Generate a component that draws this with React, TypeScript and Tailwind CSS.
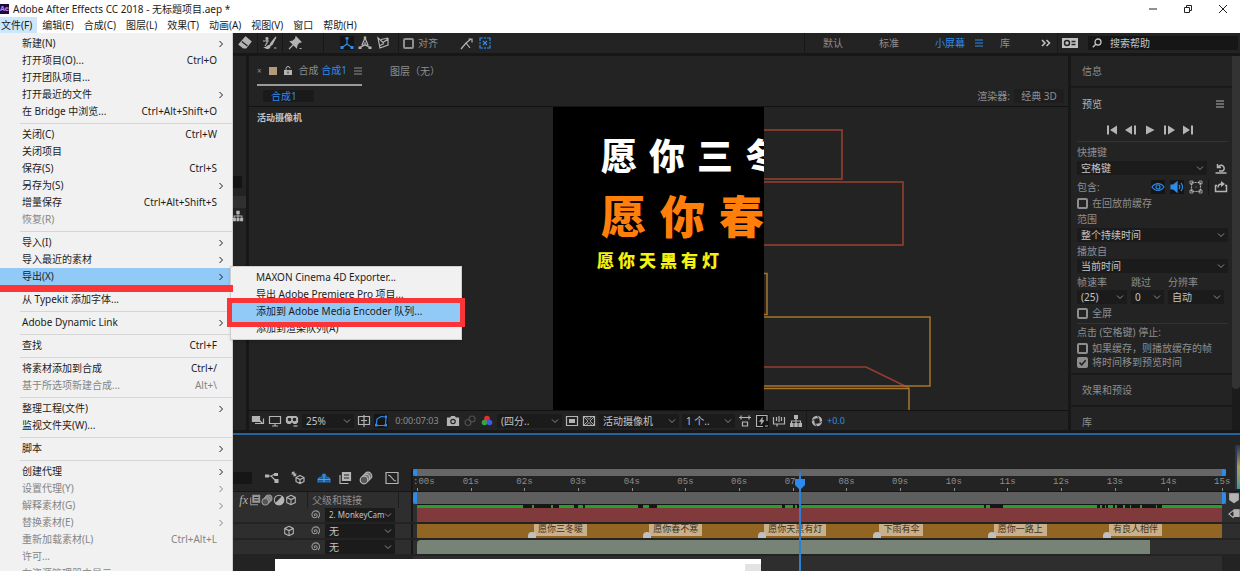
import { Fragment } from "react";
import type { ReactNode } from "react";
import clsx from "clsx";

type MenuEntry = {
  label: string;
  keys?: string;
  sub?: boolean;
  disabled?: boolean;
  open?: boolean;
};

const menuBar = ["文件(F)", "编辑(E)", "合成(C)", "图层(L)", "效果(T)", "动画(A)", "视图(V)", "窗口", "帮助(H)"];

const fileMenu: MenuEntry[][] = [
  [
    { label: "新建(N)", sub: true },
    { label: "打开项目(O)...", keys: "Ctrl+O" },
    { label: "打开团队项目..." },
    { label: "打开最近的文件", sub: true },
    { label: "在 Bridge 中浏览...", keys: "Ctrl+Alt+Shift+O" },
  ],
  [
    { label: "关闭(C)", keys: "Ctrl+W" },
    { label: "关闭项目" },
    { label: "保存(S)", keys: "Ctrl+S" },
    { label: "另存为(S)", sub: true },
    { label: "增量保存", keys: "Ctrl+Alt+Shift+S" },
    { label: "恢复(R)", disabled: true },
  ],
  [
    { label: "导入(I)", sub: true },
    { label: "导入最近的素材", sub: true },
    { label: "导出(X)", sub: true, open: true },
  ],
  [{ label: "从 Typekit 添加字体..." }],
  [{ label: "Adobe Dynamic Link", sub: true }],
  [{ label: "查找", keys: "Ctrl+F" }],
  [
    { label: "将素材添加到合成", keys: "Ctrl+/" },
    { label: "基于所选项新建合成...", keys: "Alt+\\", disabled: true },
  ],
  [{ label: "整理工程(文件)", sub: true }, { label: "监视文件夹(W)..." }],
  [{ label: "脚本", sub: true }],
  [
    { label: "创建代理", sub: true },
    { label: "设置代理(Y)", sub: true, disabled: true },
    { label: "解释素材(G)", sub: true, disabled: true },
    { label: "替换素材(E)", sub: true, disabled: true },
    { label: "重新加载素材(L)", keys: "Ctrl+Alt+L", disabled: true },
    { label: "许可...", disabled: true },
    { label: "在资源管理器中显示", disabled: true },
  ],
];

const exportMenu = [
  "MAXON Cinema 4D Exporter...",
  "导出 Adobe Premiere Pro 项目...",
  "添加到 Adobe Media Encoder 队列...",
  "添加到渲染队列(A)",
];

const markers = [
  { at: 14.3, text: "愿你三冬暖" },
  { at: 28.6, text: "愿你春不寒" },
  { at: 42.9, text: "愿你天黑有灯" },
  { at: 57.2, text: "下雨有伞" },
  { at: 71.4, text: "愿你一路上" },
  { at: 85.7, text: "有良人相伴" },
];

// cached ranges of the preview, start and end
const cached = [
  [0, 106], [115, 117], [134, 136], [142, 157], [161, 166], [168, 221], [226, 232], [240, 365],
  [368, 376], [378, 380], [382, 567], [569, 573], [586, 680], [683, 685], [688, 689], [691, 696],
  [698, 700], [706, 708], [713, 714], [723, 725], [739, 740], [745, 805],
];

function Icon({ children, className = "size-3.5" }: { children: ReactNode; className?: string }) {
  return (
    <svg
      viewBox="0 0 14 14"
      className={clsx("shrink-0", className)}
      fill="none"
      stroke="currentColor"
      strokeWidth="1.2"
      aria-hidden="true"
    >
      {children}
    </svg>
  );
}

function IconButton({ name, on, className, children }: { name: string; on?: boolean; className?: string; children: ReactNode }) {
  return (
    <button
      type="button"
      aria-label={name}
      className={clsx("shrink-0", on ? "bg-[#151515] text-[#2d8ceb]" : "text-[#b4b4b4]", className)}
    >
      <Icon>{children}</Icon>
    </button>
  );
}

function Chevron({ className }: { className?: string }) {
  return (
    <svg viewBox="0 0 8 8" className={clsx("size-2 shrink-0", className)} fill="none" stroke="currentColor" aria-hidden="true">
      <path d="M1 2.5 4 5.5 7 2.5" />
    </svg>
  );
}

function Burger({ className }: { className?: string }) {
  return (
    <svg viewBox="0 0 8 8" className={clsx("size-2 shrink-0", className)} stroke="currentColor" aria-hidden="true">
      <path d="M0 1h8M0 4h8M0 7h8" />
    </svg>
  );
}

function Select({ name, value, className }: { name: string; value: string; className?: string }) {
  return (
    <div className={clsx("relative flex h-3.5 shrink-0 items-center bg-[#1b1b1b] text-[#c4c4c4]", className)}>
      <select aria-label={name} className="h-full w-full appearance-none pr-2 pl-1 outline-none">
        <option>{value}</option>
      </select>
      <Chevron className="pointer-events-none absolute right-[3px] text-[#8c8c8c]" />
    </div>
  );
}

function Check({ children, checked }: { children: ReactNode; checked?: boolean }) {
  return (
    <label className="flex h-3.5 shrink-0 items-center gap-1 whitespace-nowrap">
      <span className="relative flex size-[11px] shrink-0">
        <input
          type="checkbox"
          defaultChecked={checked}
          className="peer size-[11px] appearance-none rounded-[2px] border-2 border-[#8e8e8e] checked:bg-[#8e8e8e]"
        />
        <svg viewBox="0 0 11 11" className="pointer-events-none absolute inset-0 hidden peer-checked:block" fill="none" stroke="#222" strokeWidth="1.6">
          <path d="M2.5 5.5 4.7 7.8 8.7 3.2" />
        </svg>
      </span>
      {children}
    </label>
  );
}

function Divider() {
  return <span className="h-full w-px shrink-0 bg-[#171717]" />;
}

const cube = <path d="M7 1.5 12 4v6L7 12.5 2 10V4zM2 4l5 2.5L12 4M7 6.5v6" />;
const film = (
  <>
    <path fill="currentColor" d="M4.5 1.5h8v8h-8z" />
    <path d="M2 4v8.5h8.5" />
    <path stroke="#232323" d="M6 4h5M6 7h5" />
  </>
);
const blur = (
  <>
    <circle cx="9" cy="5" r="3.8" fill="#777" />
    <circle cx="7" cy="7" r="3.8" fill="#777" />
    <circle cx="5" cy="9" r="3.8" fill="#555" />
  </>
);
const tree = (
  <>
    <path fill="currentColor" stroke="none" d="M5 1h4v4H5zM1 9h3.6v4H1zM5.2 9h3.6v4H5.2zM9.4 9H13v4H9.4z" />
    <path d="M7 5v4M2.5 9V7h9v2" />
  </>
);
const spiral = <path d="M7.5 7.5c-1 .8-2-.6-1-1.5 1.5-1.2 3.6.2 3 2.2-.8 2.5-4.6 2.6-5.7.2C2.500 5.200 4.600 2.200 7.700 2.200c3 0 5 2.300 4.500 5.300-.2 1.500-1 2.500-1.800 3.200" />;

function FileMenu() {
  return (
    <div
      role="menu"
      aria-label="文件"
      className="absolute top-full left-0 z-20 w-[233px] border-r border-[#d0d0d0] bg-[#f1f1f1] pt-[2px] pb-4 text-[10px] text-[#1c1c1c]"
    >
      {fileMenu.map((group, i) => (
        <Fragment key={i}>
          {i > 0 && <hr className="mt-[3px] mb-[2px] ml-5 border-[#d6d6d6]" />}
          {group.map((item) => (
            <div key={item.label} className={clsx("relative mr-[2px]", item.open && "z-10 bg-[#91c9f7]")}>
              <button
                type="button"
                role="menuitem"
                disabled={item.disabled}
                className={clsx(
                  "flex h-[17px] w-full items-center justify-between pr-[13px] pl-[22px] whitespace-nowrap",
                  item.disabled && "text-[#858585]",
                )}
              >
                <span>{item.label}</span>
                {item.keys && <span>{item.keys}</span>}
                {item.sub && <Chevron className="-mr-2 -rotate-90" />}
              </button>
              {item.open && <ExportMenu />}
            </div>
          ))}
        </Fragment>
      ))}
    </div>
  );
}

function ExportMenu() {
  return (
    <>
      <div
        role="menu"
        aria-label="导出"
        className="absolute -top-[2px] left-full w-[232px] border border-[#cfcfcf] bg-[#f1f1f1] pt-[2px] pb-[2px] shadow-sm"
      >
        {exportMenu.map((label, i) => (
          <div key={label} className={clsx("relative", i === 2 && "z-10")}>
            {i === 2 && (
              <span className="absolute -inset-x-1 -top-[5px] -bottom-[7px] border-[5px] border-[#fb3438] bg-[#91c9f7]" />
            )}
            <button type="button" role="menuitem" className="relative flex h-[17px] w-full items-center pl-[25px] whitespace-nowrap">
              {label}
            </button>
          </div>
        ))}
      </div>
      <span className="absolute top-full left-0 h-[7px] w-[233px] bg-[#fb3438]" />
    </>
  );
}

function Toolbar() {
  return (
    <div className="flex h-[23px] shrink-0 items-center border-b-[3px] border-[#171717] pl-[238px] text-[10px] text-[#8e8e8e]">
      <IconButton name="橡皮擦">
        <path fill="currentColor" d="M7.500 1 13 5.500 8 12H5.500L1 8.500z" />
        <path stroke="#232323" d="M3.800 5.500 9.500 10" />
      </IconButton>
      <div className="flex h-full items-center gap-[5px] pl-[5px]">
        <Divider />
        <IconButton name="Roto 笔刷">
          <path fill="currentColor" d="M13 1 8 7 6.500 10 9 8.500zM6 9.500c-1.500 0-2 2-4 2 2 1.500 5 1 5-1z" />
          <circle cx="4" cy="2.500" r="1" fill="currentColor" />
          <path d="M0 5h6M4 4v3L2 10M11 12h2.500" />
        </IconButton>
        <Divider />
        <IconButton name="操控点">
          <path fill="currentColor" d="M8 1l5 5-2 .5L9 9l-.5 2.500L2.500 5.500 5 5l2.500-2z" />
          <path d="M5.500 8.500 1 13M11.500 12.500h2" />
        </IconButton>
      </div>
      <div className="ml-[21px] flex h-full items-center gap-1">
        <Divider />
        <IconButton name="本地轴" on className="ml-3">
          <path d="M7 2.500V8M7 8l-5 3.500M7 8l5 3.500" />
          <path fill="currentColor" stroke="none" d="M5.500 1h3v2.500h-3zM.5 10h3v3h-3zM10.500 10h3v3h-3z" />
        </IconButton>
        <IconButton name="世界轴">
          <path d="M7 2 4 9h6zM7 6v3l-5 2.500M7 9l5 2.500" />
          <path fill="currentColor" stroke="none" d="M5.800.5h2.400v2.500H5.800zM.5 10.500h3v2.500h-3zM10.500 10.500h3v2.500h-3z" />
        </IconButton>
        <IconButton name="视图轴">
          <path d="M2 2l2 10 8-3V3L7 6.500zM5 3.500 12 2M4 9.500l4-2" />
        </IconButton>
      </div>
      <div className="ml-2 flex h-full items-center gap-1">
        <Divider />
        <Check>对齐</Check>
      </div>
      <div className="ml-[22px] flex gap-1">
        <IconButton name="延伸对齐">
          <path d="M1 13 6 7l4 5M6 7l5-4M8.500 3H12v3.500" />
        </IconButton>
        <IconButton name="边界对齐">
          <path stroke="#2d8ceb" d="M2 5V2h3M9 2h3v3M12 9v3H9M5 12H2V9M7 1v2M7 11v2M1 7h2M11 7h2" />
          <path stroke="#2d8ceb" d="M5 5l4 4M9 5 5 9" />
        </IconButton>
      </div>
      <div className="ml-auto flex h-full items-center">
        <Divider />
        <nav className="mr-[17px] ml-[18px] flex items-center gap-9 whitespace-nowrap">
          <button type="button">默认</button>
          <button type="button">标准</button>
          <button type="button" className="flex items-center gap-2.5 text-[#2d8ceb]">
            小屏幕 <Burger />
          </button>
        </nav>
        <button type="button">库</button>
        <svg viewBox="0 0 10 8" className="mr-1.5 ml-[31px] h-2 w-2.5" fill="none" stroke="#c4c4c4" strokeWidth="1.5">
          <path d="M1 1l3 3-3 3M5.500 1l3 3-3 3" />
        </svg>
        <Divider />
        <svg viewBox="0 0 16 10" className="mx-1 h-2.5 w-4" aria-hidden="true">
          <rect width="16" height="10" fill="#c0c0c0" />
          <circle cx="5" cy="5" r="2.500" fill="none" stroke="#222" strokeWidth="1.500" />
          <path d="M9.500 3.500h4M9.500 6.500h4" stroke="#222" strokeWidth="1.500" />
        </svg>
        <label className="mr-[2px] ml-[6px] flex h-3.5 w-[150px] items-center gap-2 bg-[#161616] pl-1 text-[#c4c4c4]">
          <svg viewBox="0 0 10 10" className="size-2.5 shrink-0" fill="none" stroke="currentColor" strokeWidth="1.300">
            <circle cx="6" cy="4" r="3" />
            <path d="M3.800 6.200.8 9.200" />
          </svg>
          <input aria-label="搜索帮助" placeholder="搜索帮助" className="w-full outline-none placeholder:text-[#c4c4c4]" />
        </label>
      </div>
    </div>
  );
}

function Viewer() {
  return (
    <section className="flex min-w-0 flex-1 flex-col border-r-[3px] border-[#171717] text-[10px] text-[#8e8e8e]">
      <div className="flex h-[30px] items-end gap-7 pl-2 whitespace-nowrap">
        <button type="button" className="flex h-[25px] items-center gap-[7px] border-b-2 border-[#9a9a9a] pb-1">
          <span className="text-[8px]">×</span>
          <span className="size-2 bg-[#b49a78]" />
          <svg viewBox="0 0 8 9" className="h-[9px] w-2" fill="#b4b4b4">
            <path d="M0 4h8v5H0z" />
            <path d="M2 4V2.500a2 2 0 0 1 4 0" fill="none" stroke="#b4b4b4" />
            <path d="M3.500 5.500h1v2h-1z" fill="#222" />
          </svg>
          <span>
            合成 <span className="text-[#2d8ceb]">合成1</span>
          </span>
          <Burger />
        </button>
        <button type="button" className="h-[25px] pb-1">图层（无）</button>
      </div>
      <div className="flex h-[21px] items-center justify-between border-b border-[#121212] pr-1 pl-3.5">
        <button type="button" className="h-3 w-[51px] bg-[#1a1a1a] pl-2 text-left leading-3 text-[#2d8ceb]">
          合成1
        </button>
        <div className="flex items-center gap-1">
          <span>渲染器:</span>
          <button type="button" className="h-3.5 w-[50px] bg-[#1e1e1e] leading-3">经典 3D</button>
        </div>
      </div>
      <div className="relative flex flex-1 justify-center overflow-hidden">
        <span className="absolute top-1 left-2 text-[9px] font-bold text-[#c4c4c4]">活动摄像机</span>
        <div className="relative h-full w-[211px] bg-black whitespace-nowrap">
          <div className="flex h-full flex-col overflow-hidden pl-11 font-black">
            <div className="mt-[26px] flex gap-3 pl-1 text-[36px] leading-12 text-white">
              <span>愿</span>
              <span>你</span>
              <span>三</span>
              <span>冬</span>
            </div>
            <div className="mt-2 flex gap-3.5 pl-1 text-[45px] leading-14 text-[#ff7f0a]">
              <span>愿</span>
              <span>你</span>
              <span>春</span>
            </div>
            <div className="mt-1 flex gap-1 text-[17px] leading-6 text-[#f2f20c]">
              {"愿你天黑有灯".split("").map((c) => (
                <span key={c}>{c}</span>
              ))}
            </div>
          </div>
          {/* layer bounds that hang outside the frame */}
          <svg viewBox="0 0 170 304" className="absolute top-0 left-full h-[304px] w-[170px]" fill="none" strokeWidth="1.500">
            <path stroke="#9c4230" d="M0 23h78v49H0M0 75h139v63H0" />
            <path stroke="#94402f" d="M0 260h102L145 281" />
            <path stroke="#a8742c" d="M0 166.500h3v41H0M0 210h166v69H0M0 281.500h145v23" />
          </svg>
        </div>
      </div>
      <div className="flex h-[20px] items-center gap-[3px] border-t border-[#121212] pl-[2px] whitespace-nowrap">
        <IconButton name="始终预览">
          <path d="M1.500 2.500h7v5h-7z" fill="currentColor" />
          <path d="M4 9.500h8.500V4.500M8.500 6.500l3 3" />
        </IconButton>
        <IconButton name="主查看器">
          <path d="M1.500 2.500h11v7h-11zM7 9.500V12M4 12h6" />
        </IconButton>
        <IconButton name="沉浸式">
          <path fill="currentColor" d="M1.500 4 3 2.500h8L12.500 4v4L11 9.500H9L7 7.500 5 9.500H3L1.500 8z" />
          <circle cx="4.500" cy="5.500" r="1.200" fill="#232323" stroke="#232323" />
          <circle cx="9.500" cy="5.500" r="1.200" fill="#232323" stroke="#232323" />
          <path d="M8.500 12h4" />
        </IconButton>
        <Select name="放大率" value="25%" className="w-[52px]" />
        <IconButton name="网格">
          <path d="M1.500 2.500h11v8h-11zM7 1v12M4 6.500h6" />
        </IconButton>
        <IconButton name="蒙版" on>
          <path d="M2 11.500 3 5l4-2.500 5 .5-.5 8.500z" />
          <path fill="currentColor" stroke="none" d="M1 10h2.500v2.500H1zM10.500 10H13v2.500h-2.500zM11 1.500h2V4h-2z" />
        </IconButton>
        <span className="w-[52px] text-center text-[9px]">0:00:07:03</span>
        <IconButton name="快照">
          <path fill="currentColor" d="M1.500 4h3l1-1.500h3l1 1.500h3v7.500h-11z" />
          <circle cx="7" cy="7.500" r="2.200" stroke="#232323" />
        </IconButton>
        <IconButton name="显示快照" className="opacity-30">
          <circle cx="9" cy="5" r="3" />
          <circle cx="5" cy="8.500" r="3" />
        </IconButton>
        <IconButton name="通道">
          <circle cx="7" cy="4.500" r="2.800" fill="#e03030" stroke="none" />
          <circle cx="4.500" cy="8.500" r="2.800" fill="#30a840" stroke="none" />
          <circle cx="9.500" cy="8.500" r="2.800" fill="#3a5ce0" stroke="none" />
        </IconButton>
        <Select name="分辨率" value="(四分.." className="w-[65px]" />
        <IconButton name="目标区域">
          <path d="M1.500 2.500h11v9h-11z" />
          <path fill="currentColor" stroke="none" d="M4 5h6v4H4z" />
        </IconButton>
        <IconButton name="透明网格">
          <path d="M1.500 2.500h11v9h-11z" />
          <path strokeWidth=".9" d="M2 3l4 4-4 4M12 3 8 7l4 4M4.500 3 7 5.500 9.500 3M4.500 11 7 8.500 9.500 11" />
        </IconButton>
        <Select name="3D 视图" value="活动摄像机" className="w-[80px]" />
        <Select name="视图布局" value="1 个.." className="w-[53px]" />
        <IconButton name="像素长宽比">
          <path d="M1 3.500h12M3 1.500v4M11 1.500v4M4.500 8h5v4h-5z" />
        </IconButton>
        <IconButton name="快速预览" className="bg-[#151515]">
          <path d="M12 7V1.500H1.500v11H8M10 12h3" />
          <path fill="currentColor" strokeWidth=".6" d="M7.500 3.500 4.500 7.500h2l-.5 3L9 6.500H7z" />
        </IconButton>
        <IconButton name="时间轴">
          <path d="M1.500 3v7h11V3M4.500 3v4M7 2v6M9.500 3v4M5 10.500v2" />
        </IconButton>
        <IconButton name="流程图">{tree}</IconButton>
        <Divider />
        <IconButton name="重置曝光度">
          <circle cx="7" cy="7" r="4" strokeWidth="2.500" />
          <path stroke="#232323" strokeWidth=".8" d="M7 1l2 4M13 7l-4 2M7 13l-2-4M1 7l4-2" />
        </IconButton>
        <span className="text-[9px] text-[#2d8ceb]">+0.0</span>
      </div>
    </section>
  );
}

const playback = [
  { name: "第一帧", d: "M2 2.500h2v9H2zM12 2.500v9L5 7z" },
  { name: "上一帧", d: "M8 2.500v9L1 7zM10 2.500h2v9h-2z" },
  { name: "播放", d: "M3 2.500v9L11.500 7z" },
  { name: "下一帧", d: "M2 2.500h2v9H2zM6 2.500v9L13 7z" },
  { name: "最后一帧", d: "M2 2.500v9L9 7zM10 2.500h2v9h-2z" },
];

function PreviewPanel() {
  return (
    <aside className="flex w-[169px] shrink-0 text-[10px] whitespace-nowrap text-[#8e8e8e]">
      <div className="flex min-w-0 flex-1 flex-col">
        <h2 className="flex h-8 shrink-0 items-center border-b-2 border-[#1a1a1a] pl-[11px]">信息</h2>
        <div className="flex shrink-0 flex-col border-b-2 border-[#1a1a1a] pr-1 pl-1.5">
          <h2 className="flex h-8 items-center justify-between pr-1 pl-[5px] text-[#b4b4b4]">
            预览 <Burger />
          </h2>
          <div className="flex h-[22px] items-center justify-center gap-[5px] border-b border-[#333] pr-1.5 pb-[2px] text-[#b4b4b4]">
            {playback.map((b) => (
              <button key={b.name} type="button" aria-label={b.name}>
                <svg viewBox="0 0 14 14" className="size-3.5" fill="currentColor">
                  <path d={b.d} />
                </svg>
              </button>
            ))}
          </div>
          <span className="mt-[2px] h-4 leading-4">快捷键</span>
          <div className="flex h-4 items-center justify-between">
            <Select name="快捷键" value="空格键" className="w-[130px]" />
            <IconButton name="重置">
              <path strokeWidth="1.500" d="M1.500 12h11M5 10h3.500a3 3 0 1 0-4-4M3.500 3v3.500H7" />
            </IconButton>
          </div>
          <div className="mt-[3px] flex h-4 items-center gap-[5px]">
            <span className="mr-auto">包含:</span>
            <IconButton name="视频" on>
              <path d="M1 7c3-4.500 9-4.500 12 0-3 4.500-9 4.500-12 0z" />
              <circle cx="7" cy="7" r="2" />
            </IconButton>
            <IconButton name="音频" on>
              <path fill="currentColor" d="M1 5h2.500L7 2v10L3.500 9H1z" />
              <path d="M9 5c1 1 1 3 0 4M11 3c2 2 2 6 0 8" />
            </IconButton>
            <IconButton name="叠加">
              <path d="M2.500 2.500h9v9h-9z" strokeDasharray="2 1" />
              <path d="M1 1h3v3H1zM10 1h3v3h-3zM1 10h3v3H1zM10 10h3v3h-3zM6.500 7h1" strokeWidth=".8" />
            </IconButton>
            <Divider />
            <IconButton name="循环">
              <path strokeWidth="1.500" d="M3 5.500H1.500v6h11v-6H11M4 7.500c0-2.500 1-3.500 4-3.500" />
              <path fill="currentColor" stroke="none" d="M7 1l4 3-4 3z" />
            </IconButton>
          </div>
          <div className="mt-px">
            <Check>在回放前缓存</Check>
          </div>
          <span className="mt-px h-4 leading-4">范围</span>
          <Select name="范围" value="整个持续时间" className="mt-px w-full" />
          <span className="mt-px h-4 leading-4">播放自</span>
          <Select name="播放自" value="当前时间" className="w-full" />
          <div className="mt-px flex gap-1 pr-1">
            <div className="w-[50px]">
              <span className="block h-4 leading-4">帧速率</span>
              <Select name="帧速率" value="(25)" />
            </div>
            <div className="w-[33px]">
              <span className="block h-4 leading-4">跳过</span>
              <Select name="跳过" value="0" />
            </div>
            <div className="flex-1">
              <span className="block h-4 leading-4">分辨率</span>
              <Select name="预览分辨率" value="自动" />
            </div>
          </div>
          <div className="mt-[2px] border-b border-[#333] pb-[3px]">
            <Check>全屏</Check>
          </div>
          <span className="mb-px h-4 leading-4">点击 (空格键) 停止:</span>
          <Check>如果缓存，则播放缓存的帧</Check>
          <div className="pb-1">
            <Check checked>将时间移到预览时间</Check>
          </div>
        </div>
        <h2 className="flex h-8 shrink-0 items-center border-b-2 border-[#1a1a1a] pl-[11px]">效果和预设</h2>
        <h2 className="min-h-0 flex-1 pt-2 pl-[11px]">库</h2>
      </div>
      <div className="w-2 bg-[#1b1b1b]">
        <div className="h-[89%] rounded-b bg-[#333]" />
      </div>
    </aside>
  );
}

type LayerRowProps = { parent: string; threeD?: boolean; selectClass?: string; children: ReactNode };

function LayerRow({ parent, threeD, selectClass, children }: LayerRowProps) {
  return (
    <div className="flex h-4 shrink-0 border-b-2 border-[#232323] bg-[#2e2e2e]">
      <div className="flex w-[413px] shrink-0 items-center justify-end border-r-2 border-[#171717] pr-4">
        {threeD && <Icon className="mr-3.5 size-3 text-[#b4b4b4]">{cube}</Icon>}
        <Icon className="mr-1 size-3 text-[#9a9a9a]">{spiral}</Icon>
        <Select name="父级和链接" value={parent} className={clsx("w-[70px]", selectClass)} />
      </div>
      <div className="relative mr-[18px] ml-1 flex flex-1">{children}</div>
    </div>
  );
}

function Timeline() {
  const seconds = Array.from({ length: 16 }, (_, i) => String(i).padStart(2, "0") + "s");
  return (
    <section className="relative shrink-0 border-t-2 border-[#23649f] bg-[#232323] pt-[34px] text-[10px] text-[#8e8e8e]">
      <div className="flex h-[22px]">
        <div className="flex w-[413px] shrink-0 items-center justify-end gap-[7px] border-r-2 border-[#171717] pr-3 pb-1">
          <span className="h-3 w-5 bg-[#161616]" />
          <IconButton name="合成微型流程图" className="ml-1.5">
            <path d="M1 5h5l4-2M6 5l5 5" />
            <path fill="currentColor" stroke="none" d="M0 3.500h4v3H0zM9 2h4v3H9zM9.500 8h4v4h-4z" />
          </IconButton>
          <IconButton name="草图 3D" className="ml-[5px]">
            <path d="M9 4.500 13 6.500v4L9 12.500l-4-2v-4zM5 6.500l4 2 4-2M9 8.500v4M3 .5v5M.5 3h5M1 1l4 4" />
          </IconButton>
          <IconButton name="消隐" className="ml-[5px]">
            <path stroke="#2478c8" fill="#1c5a96" d="M1 8c1-2 2-2 4-2 0-4 4-4 4 0 2 0 3 0 4 2v3H1z" />
            <path stroke="#49a0f0" d="M7 3v8M1 8.500h12" />
          </IconButton>
          <IconButton name="帧混合">{film}</IconButton>
          <IconButton name="运动模糊">{blur}</IconButton>
          <IconButton name="图表编辑器" className="ml-[5px]">
            <path d="M1 1.500h12v11H1zM3 4c4 0 4 6 8 6" />
          </IconButton>
        </div>
        <div className="mr-[18px] ml-1 flex min-w-0 flex-1 flex-col">
          <div className="-mx-1 flex h-[7px] shrink-0 justify-between bg-[#666]">
            <span className="w-1 rounded-l-full bg-[#2d8ceb]" />
            <span className="w-1 rounded-r-full bg-[#2d8ceb]" />
          </div>
          <div className="flex h-[15px] pt-px font-['Liberation_Mono','Noto_Sans_CJK_SC',monospace] text-[9px] leading-[11px]">
            {seconds.map((s, i) => (
              <div key={s} className={clsx("flex flex-col justify-between", i < 15 ? "flex-1" : "w-0")}>
                <span className={i === 0 ? "-ml-1" : "-ml-2"}>{i === 0 ? ":00s" : s}</span>
                <span className="h-[3px] w-px shrink-0 bg-[#8e8e8e]" />
              </div>
            ))}
          </div>
        </div>
      </div>
      <div className="flex h-[17px] border-t border-[#171717] bg-[#2e2e2e]">
        <div className="flex w-[413px] shrink-0 items-center justify-end border-r-2 border-[#171717] pr-3">
          <span className="mr-px font-['Liberation_Serif','Noto_Sans_CJK_SC',serif] text-[12px] leading-4 text-[#b4b4b4] italic">fx</span>
          <Icon className="size-3 text-[#9a9a9a]">{film}</Icon>
          <Icon className="size-3 text-[#9a9a9a]">{blur}</Icon>
          <Icon className="size-3 text-[#b4b4b4]">
            <circle cx="7" cy="7" r="5.500" />
            <path fill="currentColor" d="M11 3a5.500 5.500 0 0 1-8 8z" />
          </Icon>
          <Icon className="size-3 text-[#b4b4b4]">{cube}</Icon>
          <div className="ml-2.5 flex h-full w-[92px] items-center border-x border-[#1e1e1e] pl-1">父级和链接</div>
        </div>
        <div className="mr-[18px] ml-1 flex flex-1 flex-col">
          <div className="-mx-1 flex h-3 justify-between bg-[#5e5e5e]">
            <span className="w-1 rounded-l bg-[#2d8ceb]" />
            <span className="w-1 rounded-r bg-[#2d8ceb]" />
          </div>
          <svg viewBox="0 0 805 4" preserveAspectRatio="none" className="h-1 w-full" shapeRendering="crispEdges">
            <path fill="#161616" d="M0 0h805v4H0z" />
            {cached.map(([a, b]) => (
              <rect key={a} x={a} y="1" width={b - a} height="3" fill="#22a22c" />
            ))}
          </svg>
        </div>
      </div>
      <LayerRow parent="2. MonkeyCam" selectClass="text-[8px]">
        <div className="flex-1 bg-[#803a3c]" />
      </LayerRow>
      <LayerRow parent="无" threeD>
        <div className="flex-1 bg-[#936522]" />
        {markers.map((m) => (
          <div key={m.at} className="absolute inset-y-0 flex items-end" style={{ left: `${m.at}%` }}>
            <span className="z-10 -ml-1 h-1.5 w-2 rounded-t-full bg-[#c0c0c0]" />
            <span className="-ml-0.5 h-3 self-start bg-[#c9b08a] px-1 text-[9px] leading-[9px] whitespace-nowrap text-[#3c3020]">
              {m.text}
            </span>
          </div>
        ))}
      </LayerRow>
      <LayerRow parent="无">
        <div className="w-[91%] rounded-tl bg-[#788377]" />
      </LayerRow>
      <div className="mr-[18px] ml-[413px] h-[15px] bg-[#2e2e2e]" />
      <div className="pointer-events-none absolute inset-y-0 right-[18px] left-[417px] z-10 pt-9">
        <div className="ml-[47.5%] h-full w-[2px] bg-[#2d7fd0]">
          <svg viewBox="0 0 10 11" className="relative top-2 -left-1 h-[11px] w-2.5 max-w-none" fill="#2d8ceb">
            <path d="M0 0h10v6l-5 5-5-5z" />
          </svg>
        </div>
      </div>
      {/* audio meter and marker bins at the right edge */}
      <div className="absolute top-2.5 right-0 flex flex-col items-end">
        <div className="h-11 w-[5px] border-l-2 border-[#2b3550] bg-linear-to-b from-[#2b3550] via-[#b09c48] to-[#2c9c86]" />
        <Icon className="mt-[3px] size-3 text-[#b4b4b4]">
          <path fill="currentColor" d="M2 2h10v7l-5 3.500L2 9z" />
        </Icon>
        <Icon className="mt-1 size-3 text-[#b4b4b4]">
          <path fill="currentColor" d="M7 2h6v8H7z" />
          <path d="M6 3 1 7l5 4 3-4z" />
        </Icon>
      </div>
      <div className="absolute bottom-0 left-[275px] flex h-3 w-[486px] items-end justify-end bg-white">
        <span className="h-[7px] w-4 bg-[#e3e3e3]" />
      </div>
    </section>
  );
}

export default function App() {
  return (
    <div
      lang="zh-CN"
      className="flex h-screen flex-col overflow-hidden bg-[#232323] font-['Noto_Sans','Noto_Sans_CJK_SC',sans-serif] select-none"
    >
      <header className="relative shrink-0 bg-white text-[10px] text-[#1c1c1c]">
        <div className="flex h-[17px] items-center">
          <span className="h-2.5 w-[9px] overflow-hidden bg-[#1f0a3c] text-[7px] leading-[10px] font-bold text-[#b48cf0]">Ae</span>
          <h1 className="ml-1 leading-4">Adobe After Effects CC 2018 - 无标题项目.aep *</h1>
          <div className="ml-auto flex items-center gap-[25px] pr-3">
            <button type="button" aria-label="最小化">
              <svg viewBox="0 0 10 10" className="size-2.5" stroke="#222"><path d="M1 5h8" /></svg>
            </button>
            <button type="button" aria-label="还原">
              <svg viewBox="0 0 10 10" className="size-2.5" fill="none" stroke="#222"><path d="M1.500 3.500h5v5h-5zM3.500 3.500v-2h5v5h-2" /></svg>
            </button>
            <button type="button" aria-label="关闭">
              <svg viewBox="0 0 10 10" className="size-2.5" stroke="#222"><path d="M1 1l8 8M9 1 1 9" /></svg>
            </button>
          </div>
        </div>
        <nav className="-ml-1 flex h-4">
          {menuBar.map((m, i) => (
            <button key={m} type="button" className={clsx("px-[5px] leading-4 whitespace-nowrap", i === 0 && "bg-[#cce6fb]")}>
              {m}
            </button>
          ))}
        </nav>
        <FileMenu />
      </header>
      <Toolbar />
      <main className="flex min-h-0 flex-1 border-b-[3px] border-[#171717]">
        <div className="flex w-[249px] shrink-0 flex-col items-end border-r-[3px] border-[#171717] pt-[120px]">
          <div className="mr-1 h-3 w-8 bg-[#141414]" />
          <div className="mt-2 h-3 w-full bg-[#303030]" />
          <Icon className="mt-[2px] mr-[2px] size-3 text-[#b4b4b4]">{tree}</Icon>
        </div>
        <Viewer />
        <PreviewPanel />
      </main>
      <Timeline />
    </div>
  );
}
